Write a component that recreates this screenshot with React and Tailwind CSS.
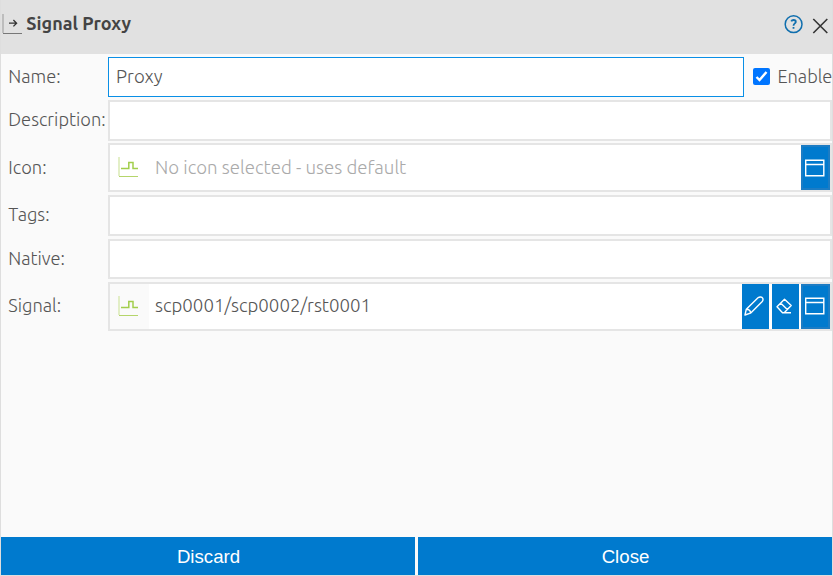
import React from "react";

const font = "font-['Ubuntu','Open_Sans','Noto_Sans',sans-serif]";

function SignalIcon() {
  return (
    <svg width="22" height="22" viewBox="0 0 22 22" fill="none" className="mb-px shrink-0">
      <path d="M1 1V20" stroke="#dcebb9" strokeWidth="1.6" />
      <path d="M1 20.5H20" stroke="#b5d56b" strokeWidth="1" />
      <path d="M3 12.5H10.8V6.5H15V12.5H20" stroke="#a2ce4c" strokeWidth="1.5" />
    </svg>
  );
}

function WindowButton({ pad = "pb-0" }) {
  return (
    <button className={`flex h-[45px] w-[29px] shrink-0 items-center justify-center border-2 border-[#1c7cc4] bg-[#007ace] pr-[2px] ${pad}`}>
      <svg width="20" height="18" viewBox="0 0 20 18" fill="none" stroke="#fff" strokeWidth="1.4" className="shrink-0">
        <path d="M.7 1.2H18.8V16.8H.7ZM.7 5.5H18.8" />
      </svg>
    </button>
  );
}

function Row({ label, height, pad = "pb-[2px]", children }) {
  return (
    <div className={`flex items-center ${height}`}>
      <div className={`w-[107px] shrink-0 pl-[7.3px] text-[18.3px] whitespace-nowrap ${pad}`}>{label}</div>
      {children}
    </div>
  );
}

const box = "flex h-full w-[724px] shrink-0 items-center border-2 border-[#e5e5e5] bg-white";

export default function App() {
  return (
    <div className={`flex h-[576px] w-[833px] flex-col overflow-hidden border-x border-b border-[#dedede] bg-[#fafafa] text-[18.67px] leading-[24px] font-light text-[#555] ${font}`}>
      <header className="flex h-[54px] shrink-0 items-start bg-[#e1e1e1] text-[#444]">
        <svg width="21" height="22" viewBox="0 0 21 22" fill="none" className="mt-[13px] ml-px shrink-0">
          <path d="M1 1V20" stroke="#aaa" strokeWidth="1.3" />
          <path d="M1 20.5H20" stroke="#777" />
          <path d="M7 10.2H14.5M11.4 7L14.6 10.2L11.4 13.4" stroke="#333" strokeWidth="1.3" />
        </svg>
        <h1 className="mt-[11px] ml-[3.3px] text-[18px] font-bold">Signal Proxy</h1>
        <div className="mt-[14px] mr-[4px] ml-auto flex items-start">
          <svg width="20" height="20" viewBox="0 0 20 20" fill="none" stroke="#106fae" className="mr-[9px]">
            <circle cx="10.6" cy="10.2" r="8.4" strokeWidth="1.5" />
            <path d="M8.2 7.4C8.7 6.4 9.6 6 10.6 6C12 6 12.8 6.8 12.8 7.9C12.8 9.4 10.5 9.6 10.5 11.8M10.5 13V14.8" strokeWidth="1.8" />
          </svg>
          <svg width="16" height="16" viewBox="0 0 16 16" stroke="#333" strokeWidth="1.6" className="mt-[4px]">
            <path d="M1.3 1L15.3 15M15.3 1L1.3 15" />
          </svg>
        </div>
      </header>

      <main className="flex flex-1 flex-col pt-[3px]">
        <Row label="Name:" height="h-[40px] mb-[3px]">
          <div className="flex h-full w-[636px] shrink-0 items-center border border-[#0a8fe6] bg-white pl-[7px]">Proxy</div>
          <div className="mb-[2px] ml-[9px] flex h-[17px] w-[17px] shrink-0 items-center justify-center rounded-[2px] bg-[#0075ff]">
            <svg width="13" height="13" viewBox="0 0 13 13" fill="none" stroke="#fff" strokeWidth="2.4">
              <path d="M1.5 7L4.5 10L11.5 2" />
            </svg>
          </div>
          <span className="ml-[7.4px] pb-[2px] text-[18.3px] whitespace-nowrap">Enable</span>
        </Row>
        <Row label="Description:" height="h-[41px] mb-[2px]" pad="pb-[4px]">
          <div className={box} />
        </Row>
        <Row label="Icon:" height="h-[49px] mb-[3px]">
          <div className={box}>
            <div className="flex h-full w-[45px] shrink-0 items-center pl-[8px]"><SignalIcon /></div>
            <span className="flex-1 text-[#aaa]">No icon selected - uses default</span>
            <WindowButton />
          </div>
        </Row>
        <Row label="Tags:" height="h-[41px] mb-[3px]" pad="pb-[4px]">
          <div className={box} />
        </Row>
        <Row label="Native:" height="h-[40px] mb-[3px]">
          <div className={box} />
        </Row>
        <Row label="Signal:" height="h-[49px]" pad="pb-[4px]">
          <div className={box}>
            <div className="mr-[6px] flex h-full w-[39px] shrink-0 items-center bg-[#fafafa] pb-px pl-[8px]"><SignalIcon /></div>
            <span className="flex-1 pb-[2px]">scp0001/scp0002/rst0001</span>
            <button className="mr-[3px] flex h-[45px] w-[27px] items-center justify-center bg-[#007ace] pr-[3px] pb-[2px]">
              <svg width="20" height="20" viewBox="0 0 20 20" fill="none" stroke="#fff" strokeWidth="1.4" strokeLinejoin="round" className="shrink-0">
                <path d="M1 19L2.3 13.2L14 1.8C15.7.4 18 .8 18.7 2.2C19.3 3.5 19 4.7 18 5.8L6.5 17.2ZM2.3 13.2C4.7 13 6.8 15 6.5 17.2" />
              </svg>
            </button>
            <button className="mr-[2px] flex h-[45px] w-[27px] items-center justify-center bg-[#007ace] pr-[3px] pb-[2px]">
              <svg width="17" height="16" viewBox="0 0 17 16" fill="none" stroke="#fff" strokeWidth="1.4" strokeLinejoin="round" className="shrink-0">
                <path d="M1 8.7L8.5 1.2L15.2 7.5L8.2 14.7H6.5ZM4.6 5.1L11.3 11.5M6.5 14.7H15" />
              </svg>
            </button>
            <WindowButton pad="pb-[2px]" />
          </div>
        </Row>
      </main>

      <footer className="flex h-[38px] shrink-0 gap-[3px] font-['Liberation_Sans',Arial,sans-serif] text-[18.67px] font-normal text-white">
        <button className="h-full w-[414px] bg-[#007ace] pt-[2px] pl-px">Discard</button>
        <button className="h-full w-[414px] bg-[#007ace] pt-[2px] pl-px">Close</button>
      </footer>
    </div>
  );
}
